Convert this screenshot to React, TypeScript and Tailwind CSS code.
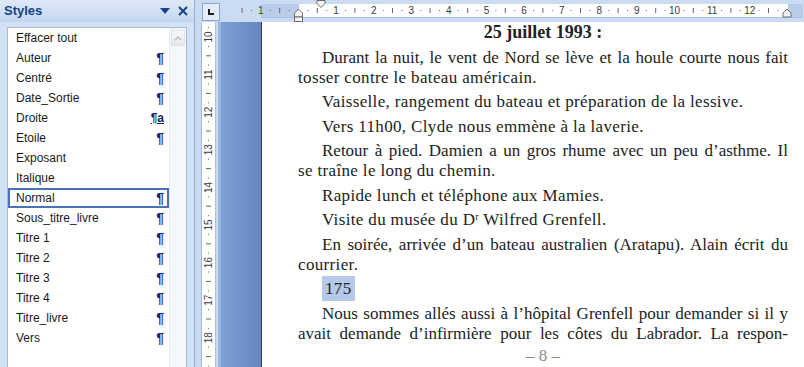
import React from "react";

type StyleItem = { name: string; mark?: "p" | "pa" };

const STYLES: StyleItem[] = [
  { name: "Effacer tout" },
  { name: "Auteur", mark: "p" },
  { name: "Centré", mark: "p" },
  { name: "Date_Sortie", mark: "p" },
  { name: "Droite", mark: "pa" },
  { name: "Etoile", mark: "p" },
  { name: "Exposant" },
  { name: "Italique" },
  { name: "Normal", mark: "p" },
  { name: "Sous_titre_livre", mark: "p" },
  { name: "Titre 1", mark: "p" },
  { name: "Titre 2", mark: "p" },
  { name: "Titre 3", mark: "p" },
  { name: "Titre 4", mark: "p" },
  { name: "Titre_livre", mark: "p" },
  { name: "Vers", mark: "p" },
];

const SELECTED = "Normal";
const CM = 37.6;

// horizontal ruler, local x = page x - 222
const H_ZERO = 77.5;
const hQuarters: number[] = [];
for (let q = -6; q <= 51; q++) if (q % 4 !== 0) hQuarters.push(q);
const hNumbers = [-1, 1, 2, 3, 4, 5, 6, 7, 8, 9, 10, 11, 12];

// vertical ruler, local y = page y - 22
const V_TEN = 15;
const vQuarters: number[] = [];
for (let q = -1; q <= 36; q++) if (q % 4 !== 0) vQuarters.push(q);
const vNumbers = [10, 11, 12, 13, 14, 15, 16, 17, 18];

const StylesPanel = () => (
  <aside className="w-[195px] h-full flex flex-col bg-[#d3e1f4] border-r border-[#8fb0de] font-['Liberation_Sans',Arial,sans-serif]">
    <div className="h-[22px] flex items-center justify-between pl-[4px] pr-[6px] bg-gradient-to-b from-[#dfe9f7] to-[#c4d7f0]">
      <span className="text-[13px] font-bold text-[#15428b]">Styles</span>
      <div className="flex items-center gap-[8px]">
        <svg width="10" height="8" viewBox="0 0 10 8">
          <path d="M0 1 H10 L5 7 Z" fill="#15428b" />
        </svg>
        <svg width="10" height="10" viewBox="0 0 10 10">
          <path d="M1 1 L9 9 M9 1 L1 9" stroke="#15428b" strokeWidth="2" />
        </svg>
      </div>
    </div>

    <div className="flex-1 pt-[5px] pl-[7px] pr-[7px] min-h-0">
      <div className="h-full flex bg-white border border-[#a3bbdd] border-b-0">
        <ul className="w-[161px]">
          {STYLES.map((s) => {
            const sel = s.name === SELECTED;
            return (
              <li
                key={s.name}
                className={[
                  "h-[20px] flex items-center justify-between text-[12px] text-[#1a1a1a]",
                  sel ? "border-2 border-[#4b72b4] pl-[6px] pr-[3px]" : "pl-[8px] pr-[5px]",
                ].join(" ")}
              >
                <span>{s.name}</span>
                {s.mark === "p" && (
                  <span className="text-[14px] font-bold text-[#1c2275] leading-none">¶</span>
                )}
                {s.mark === "pa" && (
                  <span className="text-[12px] font-bold text-[#1c2275] leading-none underline">¶a</span>
                )}
              </li>
            );
          })}
        </ul>
        <div className="flex-1 bg-[#f4f7fc] border-l border-[#e3eaf4] flex flex-col">
          <div className="h-[16px] mx-[1px] mt-[2px] border border-[#dde4ee] bg-gradient-to-b from-[#f7f7f7] to-[#e6e6e6] flex items-center justify-center">
            <svg width="8" height="5" viewBox="0 0 8 5">
              <path d="M1 4 L4 1 L7 4" stroke="#b9b9b9" strokeWidth="1.2" fill="none" />
            </svg>
          </div>
        </div>
      </div>
    </div>
  </aside>
);

const HorizontalRuler = () => (
  <svg width="582" height="22" className="block">
    <rect x="0" y="0" width="582" height="22" fill="#cbdcf2" />
    <rect x="40" y="4" width="38" height="13" fill="#b9cdea" />
    <rect x="78" y="4" width="489" height="13" fill="#ffffff" />
    <rect x="567" y="4" width="15" height="13" fill="#b9cdea" />
    <line x1="40" y1="17.5" x2="582" y2="17.5" stroke="#a9c0e3" />
    {hQuarters.map((q) => {
      const x = H_ZERO + (q * CM) / 4;
      return q % 2 === 0 ? (
        <line key={q} x1={x} y1="8" x2={x} y2="13" stroke="#666" />
      ) : (
        <rect key={q} x={x - 0.5} y="10" width="1" height="1" fill="#666" />
      );
    })}
    {hNumbers.map((n) => (
      <text
        key={n}
        x={H_ZERO + n * CM}
        y="14"
        textAnchor="middle"
        fontSize="10"
        fill="#3a3a3a"
        fontFamily="Liberation Sans, Arial, sans-serif"
      >
        {Math.abs(n)}
      </text>
    ))}
    {/* first line indent */}
    <path d="M96 0.5 H104 V3.5 L100 7.5 L96 3.5 Z" fill="#f4f4f4" stroke="#6b6b6b" />
    {/* hanging indent + left indent box */}
    <path d="M73.5 17 V13 L77.5 9 L81.5 13 V17 Z" fill="#f4f4f4" stroke="#6b6b6b" />
    <rect x="73.5" y="17" width="8" height="4.5" fill="#f4f4f4" stroke="#6b6b6b" />
    {/* right indent */}
    <path d="M562 17 V13 L566 9 L570 13 V17 Z" fill="#f4f4f4" stroke="#6b6b6b" />
  </svg>
);

const VerticalRuler = () => (
  <svg width="26" height="345" className="block">
    <rect x="0" y="0" width="26" height="345" fill="#c9daf1" />
    <rect x="6" y="0" width="1" height="345" fill="#9fb9e1" />
    <rect x="7" y="0" width="13" height="345" fill="#ffffff" />
    <rect x="20" y="0" width="1" height="345" fill="#aac1e4" />
    <rect x="23" y="0" width="3" height="345" fill="#9ab6e2" />
    {vQuarters.map((q) => {
      const y = V_TEN + (q * CM) / 4;
      return q % 2 === 0 ? (
        <line key={q} x1="11" y1={y} x2="16" y2={y} stroke="#666" />
      ) : (
        <rect key={q} x="13" y={y - 0.5} width="1" height="1" fill="#666" />
      );
    })}
    {vNumbers.map((n) => {
      const y = V_TEN + (n - 10) * CM;
      return (
        <text
          key={n}
          x="13.5"
          y={y + 3.5}
          transform={`rotate(-90 13.5 ${y})`}
          textAnchor="middle"
          fontSize="10"
          fill="#3a3a3a"
          fontFamily="Liberation Sans, Arial, sans-serif"
        >
          {n}
        </text>
      );
    })}
  </svg>
);

// full lines are stretched to the column; loose lines get a little tracking
const justify = "text-justify [text-align-last:justify]";
const loose = "tracking-[0.35px]";

const Page = () => (
  <div className="flex-1 h-full bg-white border-l border-[#3c3c3c] pl-[36px] font-['Liberation_Serif','Times_New_Roman',serif] text-[#222]">
    <div className="w-[490px]">
      <h2 className="text-[18px] font-bold leading-[20px] text-center mb-[5.5px]">25 juillet 1993 :</h2>
      <div className="text-[17px] leading-[20px] flex flex-col gap-[4.5px]">
        <p>
          <span className={`block pl-[24px] ${justify}`}>Durant la nuit, le vent de Nord se lève et la houle courte nous fait</span>
          <span className={`block ${loose}`}>tosser contre le bateau américain.</span>
        </p>
        <p className={`pl-[24px] ${loose}`}>Vaisselle, rangement du bateau et préparation de la lessive.</p>
        <p className={`pl-[24px] ${loose}`}>Vers 11h00, Clyde nous emmène à la laverie.</p>
        <p>
          <span className={`block pl-[24px] ${justify}`}>Retour à pied. Damien a un gros rhume avec un peu d’asthme. Il</span>
          <span className={`block ${loose}`}>se traîne le long du chemin.</span>
        </p>
        <p className={`pl-[24px] ${loose}`}>Rapide lunch et téléphone aux Mamies.</p>
        <p className={`pl-[24px] ${loose}`}>
          Visite du musée du D<sup className="text-[10px]">r</sup> Wilfred Grenfell.
        </p>
        <p>
          <span className={`block pl-[24px] ${justify}`}>En soirée, arrivée d’un bateau australien (Aratapu). Alain écrit du</span>
          <span className={`block ${loose}`}>courrier.</span>
        </p>
        <p className={`pl-[24px] ${loose}`}>
          <span className="bg-[#b6c9e8] px-[3px] py-[3px]">175</span>
        </p>
        <p>
          <span className={`block pl-[24px] ${justify}`}>Nous sommes allés aussi à l’hôpital Grenfell pour demander si il y</span>
          <span className={`block ${justify}`}>avait demande d’infirmière pour les côtes du Labrador. La respon-</span>
        </p>
        <p className="text-center text-[#8a8a8a] mt-[-2px]">– 8 –</p>
      </div>
    </div>
  </div>
);

export default function App() {
  return (
    <div className="w-[804px] h-[367px] flex overflow-hidden bg-[#c9daf1]">
      <StylesPanel />
      <div className="flex-1 flex flex-col">
        <div className="h-[22px] flex">
          <div className="w-[26px] pl-[7px] pt-[3px]">
            <div className="w-[18px] h-[18px] border border-[#8aa6d3] bg-[#e3ecf8] flex items-center justify-center">
              <svg width="10" height="10" viewBox="0 0 10 10">
                <path d="M3 2 V7 H8" stroke="#1e1e1e" strokeWidth="2" fill="none" />
              </svg>
            </div>
          </div>
          <HorizontalRuler />
        </div>
        <div className="flex-1 flex min-h-0">
          <VerticalRuler />
          <div className="w-[40px] h-full bg-gradient-to-r from-[#7f9fd4] to-[#6487c0]" />
          <Page />
        </div>
      </div>
    </div>
  );
}
